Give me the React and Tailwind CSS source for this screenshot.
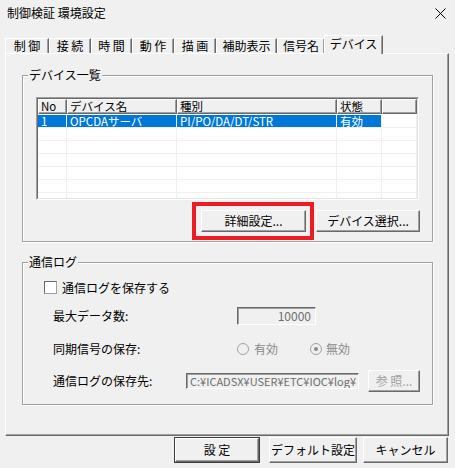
import React from 'react';

const tabs = [
  { label: '制 御', w: 'w-[44px]' },
  { label: '接 続', w: 'w-[42px]' },
  { label: '時 間', w: 'w-[41px]' },
  { label: '動 作', w: 'w-[42px]' },
  { label: '描 画', w: 'w-[42px]' },
  { label: '補助表示', w: 'w-[61px]' },
  { label: '信号名', w: 'w-[48px]' },
];

const cols = [
  { label: 'No', w: 'w-[29px]', value: '1' },
  { label: 'デバイス名', w: 'w-[110px]', value: 'OPCDAサーバ' },
  { label: '種別', w: 'w-[160px]', value: 'PI/PO/DA/DT/STR' },
  { label: '状態', w: 'w-[45px]', value: '有効' },
  { label: '', w: 'flex-1', value: null },
];

const rows = [true, false, false, false, false, false, false];

// classic raised button face
const Button = ({ children, className = '', disabled = false }) => (
  <div
    className={`flex items-center justify-center bg-[#f0f0f0] border border-t-white border-l-white border-r-[#696969] border-b-[#696969] shadow-[inset_-1px_-1px_0_#a0a0a0] ${disabled ? 'text-[#a0a0a0]' : 'text-black'} ${className}`}
  >
    {children}
  </div>
);

const Group = ({ title, className = '', children }) => (
  <div className={`relative border border-[#a0a0a0] shadow-[1px_1px_0_#ffffff,inset_1px_1px_0_#ffffff] ${className}`}>
    <span className="absolute -top-[7px] left-[5px] px-[1px] bg-[#f0f0f0] leading-none">{title}</span>
    {children}
  </div>
);

const Radio = ({ checked }) => (
  <svg width="12" height="12" viewBox="0 0 12 12">
    <circle cx="6" cy="6" r="5.5" fill="#f0f0f0" stroke="#a0a0a0" />
    {checked && <circle cx="6" cy="6" r="2" fill="#8a8a8a" />}
  </svg>
);

export default function App() {
  return (
    <div className="w-[455px] h-[468px] bg-[#f0f0f0] text-[12px] leading-none text-black font-['Noto_Sans_CJK_JP',sans-serif] flex flex-col overflow-hidden">
      {/* title bar */}
      <div className="h-[26px] flex items-center justify-between pl-[7px] pr-[9px]">
        <span>制御検証 環境設定</span>
        <svg width="11" height="11" viewBox="0 0 11 11">
          <path d="M0.5 0.5 L10.5 10.5 M10.5 0.5 L0.5 10.5" stroke="#000" strokeWidth="1" />
        </svg>
      </div>

      {/* tab strip */}
      <div className="mt-[9px] h-[18px] pl-[5px] flex items-end relative z-10">
        {tabs.map((t) => (
          <div
            key={t.label}
            className={`${t.w} h-[15px] flex items-center justify-center border-t border-l border-t-white border-l-white border-r border-r-[#696969] shadow-[inset_-1px_0_0_#a0a0a0]`}
          >
            {t.label}
          </div>
        ))}
        <div className="w-[59px] h-[19px] -mb-px -ml-[1px] flex items-center justify-center bg-[#f0f0f0] border-t border-l border-t-white border-l-white border-r border-r-[#696969] shadow-[inset_-1px_0_0_#a0a0a0] pb-[2px]">
          デバイス
        </div>
      </div>

      {/* tab page */}
      <div className="ml-[5px] w-[444px] h-[383px] border border-t-white border-l-white border-r-[#696969] border-b-[#696969] shadow-[inset_-1px_-1px_0_#a0a0a0] flex flex-col">
        <Group title="デバイス一覧" className="ml-[16px] mt-[21px] w-[411px] h-[167px] pl-[13px] pt-[21px]">
          {/* device list */}
          <div className="w-[383px] h-[103px] border border-t-[#a0a0a0] border-l-[#a0a0a0] border-r-white border-b-white">
            <div className="w-full h-full bg-white border border-t-[#696969] border-l-[#696969] border-r-[#e3e3e3] border-b-[#e3e3e3] flex flex-col overflow-hidden">
              <div className="flex h-[15px] shrink-0">
                {cols.map((c, i) => (
                  <div
                    key={i}
                    className={`${c.w} h-full flex items-center pl-[2px] text-[11.5px] leading-[11px] bg-[#f0f0f0] border-t border-l border-t-white border-l-white border-r border-b border-r-[#696969] border-b-[#696969] shadow-[inset_-1px_-1px_0_#a0a0a0]`}
                  >
                    {c.label}
                  </div>
                ))}
              </div>
              <div className="pt-[1px] flex flex-col">
                {rows.map((sel, r) => (
                  <div key={r} className="flex h-[13px] shrink-0 border-b border-[#f0f0f0]">
                    {cols.map((c, i) => (
                      <div
                        key={i}
                        className={`${c.w} h-full flex items-center pl-[3px] text-[11.5px] leading-[11px] border-r border-[#f0f0f0] ${sel && c.value ? 'bg-[#0078d7] text-white' : ''}`}
                      >
                        {sel ? c.value : ''}
                      </div>
                    ))}
                  </div>
                ))}
              </div>
            </div>
          </div>

          <div className="flex justify-end pr-[12px] mt-[2px]">
            <div className="border-4 border-[#ed1c24] pl-[5px] pr-[4px] py-[4px]">
              <Button className="w-[105px] h-[22px]">詳細設定...</Button>
            </div>
            <Button className="ml-[2px] mt-[8px] w-[104px] h-[22px]">デバイス選択...</Button>
          </div>
        </Group>

        <Group title="通信ログ" className="ml-[16px] mt-[20px] w-[411px] h-[143px] flex flex-col">
          <div className="flex items-center pl-[21px] mt-[18px]">
            <div className="w-[13px] h-[13px] bg-white border border-t-[#696969] border-l-[#696969] border-r-[#a0a0a0] border-b-[#a0a0a0]" />
            <span className="ml-[5px]">通信ログを保存する</span>
          </div>

          <div className="flex items-center pl-[30px] mt-[13px] h-[18px]">
            <span className="w-[184px]">最大データ数:</span>
            <div className="w-[79px] h-[18px] flex items-center justify-end pr-[4px] text-[#6d6d6d] border border-t-[#696969] border-l-[#696969] border-r-white border-b-white shadow-[inset_1px_1px_0_#a0a0a0]">
              10000
            </div>
          </div>

          <div className="flex items-center pl-[30px] mt-[15px] h-[18px]">
            <span className="w-[184px]">同期信号の保存:</span>
            <div className="flex items-center text-[#8a8a8a]">
              <Radio />
              <span className="ml-[5px] w-[56px]">有効</span>
              <Radio checked />
              <span className="ml-[4px]">無効</span>
            </div>
          </div>

          <div className="flex items-center pl-[30px] mt-[12px] h-[22px]">
            <span className="w-[133px]">通信ログの保存先:</span>
            <div className="w-[173px] h-[16px] flex items-center pl-[3px] overflow-hidden whitespace-nowrap text-[11px] text-[#6d6d6d] border border-t-[#696969] border-l-[#696969] border-r-white border-b-white shadow-[inset_1px_1px_0_#a0a0a0]">
              C:¥ICADSX¥USER¥ETC¥IOC¥log¥
            </div>
            <Button disabled className="ml-[9px] w-[52px] h-[22px]">参 照...</Button>
          </div>
        </Group>
      </div>

      {/* dialog buttons */}
      <div className="flex justify-end pr-[7px] mt-[1px]">
        <div className="border border-[#3c3c3c]">
          <Button className="w-[84px] h-[24px]">設 定</Button>
        </div>
        <Button className="ml-[9px] w-[88px] h-[26px]">デフォルト設定</Button>
        <Button className="ml-[6px] w-[85px] h-[26px]">キャンセル</Button>
      </div>
    </div>
  );
}
